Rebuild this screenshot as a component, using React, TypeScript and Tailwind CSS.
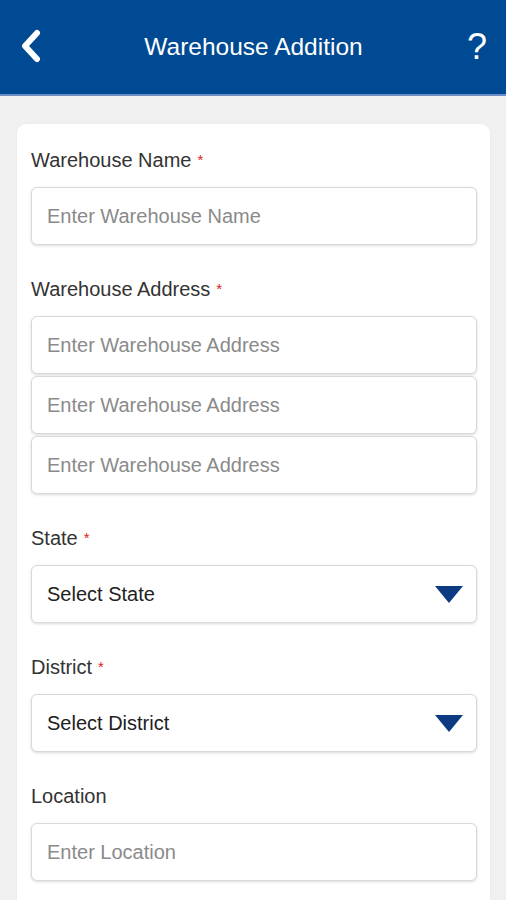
import React from 'react';

const Label = ({ text, required }: { text: string; required?: boolean }) => (
  <div className="h-[22px] leading-[22px] text-[20px] text-[#333] mb-[16px]">
    {text}
    {required && <span className="text-[#e0201b] text-[15px] align-top ml-[6px]">*</span>}
  </div>
);

const Field = ({ placeholder }: { placeholder: string }) => (
  <div className="h-[58px] rounded-[6px] border border-[#d9d9d9] bg-white shadow-[0_1px_3px_rgba(0,0,0,0.15)] flex items-center px-[15px] text-[20px] text-[#8a8a8a]">
    {placeholder}
  </div>
);

const Select = ({ value }: { value: string }) => (
  <div className="h-[58px] rounded-[6px] border border-[#d9d9d9] bg-white shadow-[0_1px_3px_rgba(0,0,0,0.15)] flex items-center justify-between pl-[15px] pr-[13px] text-[20px] text-[#222]">
    <span>{value}</span>
    <svg width="28" height="17" viewBox="0 0 28 17">
      <polygon points="0,0 28,0 14,17" fill="#0d3b82" />
    </svg>
  </div>
);

export default function App() {
  return (
    <div className="w-[506px] h-[900px] overflow-hidden bg-[#f0f0f0] [font-family:'Liberation_Sans',Arial,sans-serif]">
      {/* Header */}
      <div className="h-[96px] bg-[#004a93] border-b-[2px] border-[#6b8fc4] flex items-center justify-between pl-[18px] pr-[19px] text-white">
        <svg width="26" height="34" viewBox="0 0 26 34" className="mt-[-2px]">
          <polyline points="19,4 7,17 19,30" fill="none" stroke="#fff" strokeWidth="6" strokeLinecap="round" strokeLinejoin="round" />
        </svg>
        <div className="text-[24.5px] leading-none pr-[4px]">Warehouse Addition</div>
        <div className="text-[36px] leading-none">?</div>
      </div>

      {/* Form card */}
      <div className="pl-[17px] pr-[16px] pt-[28px]">
        <div className="bg-white rounded-[9px] pl-[14px] pr-[13px] pt-[25px] pb-[40px] shadow-[0_0_2px_rgba(0,0,0,0.05)]">
          <Label text="Warehouse Name" required />
          <Field placeholder="Enter Warehouse Name" />

          <div className="mt-[33px]">
            <Label text="Warehouse Address" required />
            <div className="flex flex-col gap-[2px]">
              <Field placeholder="Enter Warehouse Address" />
              <Field placeholder="Enter Warehouse Address" />
              <Field placeholder="Enter Warehouse Address" />
            </div>
          </div>

          <div className="mt-[33px]">
            <Label text="State" required />
            <Select value="Select State" />
          </div>

          <div className="mt-[33px]">
            <Label text="District" required />
            <Select value="Select District" />
          </div>

          <div className="mt-[33px]">
            <Label text="Location" />
            <Field placeholder="Enter Location" />
          </div>
        </div>
      </div>
    </div>
  );
}
